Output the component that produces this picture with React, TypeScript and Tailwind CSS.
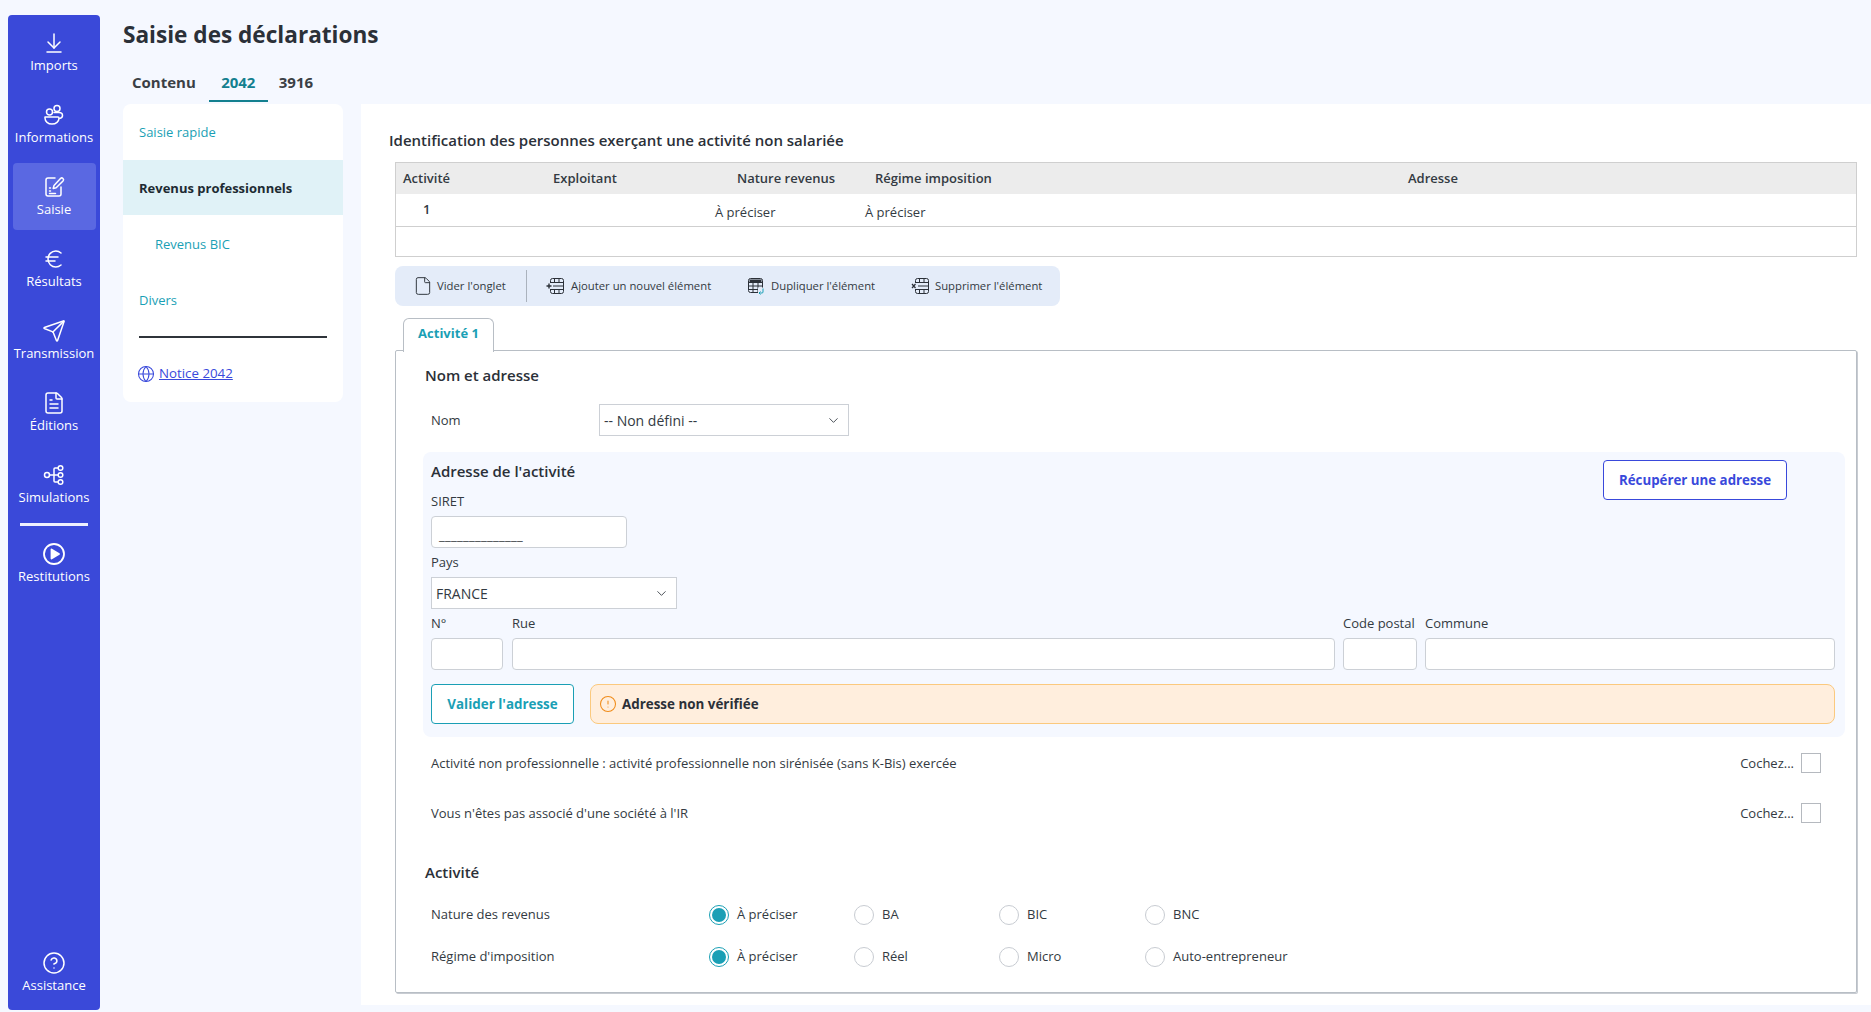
import React from "react";
import { ArrowDownToLine, Euro, Send, FileText, CircleHelp, Globe, File, ChevronDown, CircleAlert } from "lucide-react";

const Icon = ({ children }: { children: React.ReactNode }) => (
  <svg width="24" height="24" viewBox="0 0 24 24" fill="none" stroke="currentColor" strokeWidth="1.5" strokeLinecap="round" strokeLinejoin="round">{children}</svg>
);

const InfoIcon = () => (
  <Icon>
    <circle cx="7.500" cy="9" r="3" />
    <circle cx="15" cy="5.500" r="3" />
    <path d="M3 14h13c.5 0 1 .4 1 1 0 3.500-3 6-7 6s-7-2.500-7-6c0-.6 0-1 0-1z" />
    <path d="M12 9.500h5c2.500 0 3.500 1.500 3.500 3s-1 2.800-3 3" />
  </Icon>
);
const SaisieIcon = () => (
  <Icon>
    <path d="M13 3H6a2 2 0 0 0-2 2v14a2 2 0 0 0 2 2h11a2 2 0 0 0 2-2v-7" />
    <path d="M21 3.500a1.800 1.800 0 0 0-2.500 0L12 10.500l-.8 3 3-.8 6.800-6.700a1.800 1.800 0 0 0 0-2.500z" />
    <path d="M7.500 13h1M7.500 16h1M7.500 18.500h6" />
  </Icon>
);
const SimIcon = () => (
  <Icon>
    <circle cx="5" cy="12" r="2.500" />
    <circle cx="18.500" cy="5" r="2.300" />
    <circle cx="18.500" cy="12" r="2.300" />
    <circle cx="18.500" cy="19" r="2.300" />
    <path d="M7.500 12h8.700M16.200 5H13a1 1 0 0 0-1 1v12a1 1 0 0 0 1 1h3.200" />
  </Icon>
);
const PlayIcon = () => (
  <svg width="24" height="24" viewBox="0 0 24 24" fill="none" stroke="currentColor" strokeWidth="1.8">
    <circle cx="12" cy="12" r="10" />
    <path d="M9.500 7.500l7.500 4.500-7.500 4.500z" fill="currentColor" strokeLinejoin="round" />
  </svg>
);

const TableIcon = ({ mark }: { mark: "add" | "dup" | "del" }) => (
  <svg width="18" height="18" viewBox="0 0 18 18" fill="none" stroke="#2b3038" strokeWidth="1">
    {mark === "dup" ? (
      <>
        <rect x="1.500" y="1.500" width="14" height="14" rx="2" />
        <path d="M1.500 5.500h14M1.500 9h14M1.500 12.500h14M6 5.500v10M11 5.500v10" />
        <path d="M2.500 2.500h12v2.500h-12z" fill="#2b3038" stroke="none" />
        <rect x="11" y="10.500" width="6.500" height="7" fill="#e4ecf9" stroke="none" />
        <path d="M16 11.500v3.500a1 1 0 0 1-1 1h-2.500M13.500 14.500l-1.500 1.500 1.500 1.500" stroke="#1a9fb5" />
      </>
    ) : (
      <>
        <path d="M4.500 6V3.500a2 2 0 0 1 2-2h9a2 2 0 0 1 2 2v11a2 2 0 0 1-2 2h-9a2 2 0 0 1-2-2V12" />
        <path d="M5 5.500h12.500M7 9h10.500M5 12.500h12.500M8.500 1.500v4M13 1.500v4M8.500 12.500v4M13 12.500v4" />
        {mark === "add" ? (
          <path d="M.5 9h5M3 6.500v5" strokeWidth="1.400" />
        ) : (
          <path d="M1 7l3.500 4M4.500 7L1 11" strokeWidth="1.200" />
        )}
      </>
    )}
  </svg>
);

const nav = [
  { label: "Imports", icon: <ArrowDownToLine size={24} strokeWidth={1.5} /> },
  { label: "Informations", icon: <InfoIcon /> },
  { label: "Saisie", icon: <SaisieIcon />, active: true },
  { label: "Résultats", icon: <Euro size={24} strokeWidth={1.5} /> },
  { label: "Transmission", icon: <Send size={24} strokeWidth={1.5} /> },
  { label: "Éditions", icon: <FileText size={24} strokeWidth={1.5} /> },
  { label: "Simulations", icon: <SimIcon /> },
];

const NavItem = ({ label, icon, active }: { label: string; icon: React.ReactNode; active?: boolean }) => (
  <div className={`flex h-[67px] w-[83px] flex-col items-center justify-center rounded-[4px] text-white ${active ? "bg-[#5a68e2]" : ""}`}>
    {icon}
    <span className="mt-[1px] text-[13px] leading-[18px] whitespace-nowrap">{label}</span>
  </div>
);

const Input = ({ className }: { className: string }) => (
  <div className={`h-[32px] rounded-[4px] border border-[#ccd0d6] bg-white ${className}`} />
);

const Select = ({ value, className }: { value: string; className: string }) => (
  <div className={`flex h-[32px] items-center justify-between border border-[#ccd0d6] bg-white pt-[1px] pr-[7px] pl-[4px] text-[14px] text-[#333a42] ${className}`}>
    <span>{value}</span>
    <ChevronDown size={15} strokeWidth={1.4} className="text-[#333a42]" />
  </div>
);

const Radio = ({ on, label, className }: { on?: boolean; label: string; className: string }) => (
  <div className={`flex items-center gap-[8px] ${className}`}>
    <span className={`flex h-[20px] w-[20px] items-center justify-center rounded-full border bg-white ${on ? "border-[#1a9fb5]" : "border-[#c8ccd2]"}`}>
      {on && <span className="h-[14px] w-[14px] rounded-full bg-[#1a9fb5]" />}
    </span>
    <span>{label}</span>
  </div>
);

const CheckRow = ({ label, className }: { label: string; className: string }) => (
  <div className={`flex items-center justify-between pr-[24px] pl-[6px] ${className}`}>
    <span className="pt-[2px]">{label}</span>
    <div className="flex items-center gap-[7px]">
      <span className="pt-[2px]">Cochez...</span>
      <span className="h-[20px] w-[20px] border border-[#b5b9bf] bg-white" />
    </div>
  </div>
);

const RadioRow = ({ label, options, className }: { label: string; options: string[]; className: string }) => (
  <div className={`flex h-[24px] items-center pl-[6px] ${className}`}>
    <span className="w-[278px]">{label}</span>
    <Radio on label={options[0]} className="w-[145px]" />
    <Radio label={options[1]} className="w-[145px]" />
    <Radio label={options[2]} className="w-[146px]" />
    <Radio label={options[3]} className="w-[160px]" />
  </div>
);

export default function App() {
  return (
    <div className="flex h-[1012px] w-[1871px] overflow-hidden bg-[#f5f8ff] text-[13px] text-[#333a42]" style={{ fontFamily: '"Open Sans", "Noto Sans", sans-serif' }}>
      <aside className="mt-[15px] mb-[2px] ml-[8px] flex w-[92px] shrink-0 flex-col items-center rounded-[4px] bg-[#3a49d9] pt-[4px] pb-[4px]">
        <div className="flex flex-col gap-[5px]">
          {nav.map((n) => (
            <NavItem key={n.label} {...n} />
          ))}
        </div>
        <div className="mt-[5px] h-[3px] w-[68px] shrink-0 bg-[#eef0ff]" />
        <div className="mt-[4px]"><NavItem label="Restitutions" icon={<PlayIcon />} /></div>
        <div className="mt-auto"><NavItem label="Assistance" icon={<CircleHelp size={24} strokeWidth={1.5} />} /></div>
      </aside>

      <div className="ml-[23px] flex min-w-0 flex-1 flex-col">
        <h1 className="mt-[17px] h-[36px] text-[22.6px] leading-[36px] font-bold text-[#2b3038]">Saisie des déclarations</h1>
        <div className="mt-[14px] ml-[9px] flex h-[37px] items-start text-[15px] leading-[30px] font-bold text-[#3b3f45]">
          <span className="pr-[13px]">Contenu</span>
          <span className="h-[35px] w-[59px] border-b-[2px] border-[#13808f] text-center text-[#13808f]">2042</span>
          <span className="pl-[11px]">3916</span>
        </div>

        <div className="flex flex-1 items-start">
          <nav className="h-[298px] w-[220px] shrink-0 rounded-[8px] bg-white text-[13px] text-[#1a9fb5]">
            <div className="flex h-[56px] items-center pt-[2px] pl-[16px]">Saisie rapide</div>
            <div className="flex h-[55px] items-center bg-[#e0f2f7] pt-[2px] pl-[16px] font-bold text-[#1d2b33]">Revenus professionnels</div>
            <div className="flex h-[56px] items-center pt-[4px] pl-[32px]">Revenus BIC</div>
            <div className="flex h-[56px] items-center pt-[4px] pl-[16px]">Divers</div>
            <div className="mx-[16px] mt-[9px] h-[2px] bg-[#2f343a]" />
            <div className="mt-[26px] flex items-center gap-[4px] pl-[14px] text-[13.3px] text-[#3949db]">
              <Globe size={18} strokeWidth={1.4} />
              <span className="underline">Notice 2042</span>
            </div>
          </nav>

          <main className="mb-[7px] ml-[18px] h-[901px] min-w-0 flex-1 bg-white pr-[14px] pl-[28px]">
            <h2 className="mt-[23px] h-[26px] text-[15px] leading-[26px] font-semibold text-[#2b3038]">Identification des personnes exerçant une activité non salariée</h2>
            <div className="mt-[9px] ml-[6px] h-[95px] border border-[#cfcfcf] text-[13px]">
              <div className="flex h-[31px] items-center bg-[#ececec] font-semibold text-[#333a42]">
                <span className="w-[157px] pl-[7px]">Activité</span>
                <span className="w-[184px]">Exploitant</span>
                <span className="w-[138px]">Nature revenus</span>
                <span className="w-[533px]">Régime imposition</span>
                <span>Adresse</span>
              </div>
              <div className="flex h-[33px] items-center border-b border-[#cfcfcf]">
                <span className="w-[319px] pl-[27px] font-semibold">1</span>
                <span className="w-[150px] pt-[5px]">À préciser</span>
                <span className="pt-[5px]">À préciser</span>
              </div>
            </div>

            <div className="mt-[9px] ml-[6px] flex h-[40px] w-[665px] items-center rounded-[8px] bg-[#e4ecf9] pl-[19px] text-[11.3px] whitespace-nowrap">
              <File size={20} strokeWidth={1.2} className="-mx-[1px]" />
              <span className="ml-[5px] w-[70px]">Vider l'onglet</span>
              <span className="ml-[19px] h-[32px] w-px bg-[#aab2bd]" />
              <span className="ml-[19px]"><TableIcon mark="add" /></span>
              <span className="ml-[7px] w-[141px]">Ajouter un nouvel élément</span>
              <span className="ml-[35px]"><TableIcon mark="dup" /></span>
              <span className="ml-[6px] w-[112px]">Dupliquer l'élément</span>
              <span className="ml-[28px]"><TableIcon mark="del" /></span>
              <span className="ml-[6px]">Supprimer l'élément</span>
            </div>

            <div className="relative z-10 mt-[12px] -mb-[2px] ml-[14px] flex h-[34px] w-[91px] items-center justify-center rounded-t-[6px] border-[1.5px] border-b-0 border-[#b8bec5] bg-white pb-[3px] text-[13px] font-bold text-[#1a9fb5]">Activité 1</div>

            <section className="ml-[6px] h-[643px] rounded-[2px] border border-[#b8bec5] pr-[11px] pl-[29px] shadow-[1px_1px_0_#c8ccd2]">
              <h3 className="mt-[12px] h-[24px] text-[15px] leading-[24px] font-semibold text-[#2b3038]">Nom et adresse</h3>
              <div className="mt-[17px] flex items-center pl-[6px]">
                <span className="w-[168px] pt-[2px]">Nom</span>
                <Select value="-- Non défini --" className="w-[250px]" />
              </div>

              <div className="mt-[16px] -ml-[2px] h-[285px] rounded-[8px] bg-[#f5f8ff] pt-[8px] pr-[10px] pl-[8px]">
                <div className="flex items-start justify-between">
                  <div>
                    <h4 className="h-[22px] text-[15px] leading-[22px] font-semibold text-[#2b3038]">Adresse de l'activité</h4>
                    <div className="mt-[10px] h-[18px] leading-[18px]">SIRET</div>
                    <div className="mt-[6px] flex h-[32px] w-[196px] items-end rounded-[4px] border border-[#ccd0d6] bg-white pb-[5px] pl-[7px] leading-none tracking-[0.3px]">______________</div>
                    <div className="mt-[5px] h-[18px] leading-[18px]">Pays</div>
                    <Select value="FRANCE" className="mt-[6px] w-[246px]" />
                  </div>
                  <button className="mr-[48px] h-[40px] w-[184px] rounded-[4px] border border-[#3949db] bg-white pt-[2px] text-[13.3px] font-bold text-[#3949db]">Récupérer une adresse</button>
                </div>
                <div className="mt-[5px] flex gap-[8px]">
                  <div className="w-[73px]"><div className="h-[24px] leading-[18px]">N°</div><Input className="w-[72px]" /></div>
                  <div className="flex-1"><div className="h-[24px] leading-[18px]">Rue</div><Input className="w-full" /></div>
                  <div className="w-[74px]"><div className="h-[24px] leading-[18px] whitespace-nowrap">Code postal</div><Input className="w-full" /></div>
                  <div className="w-[410px]"><div className="h-[24px] leading-[18px]">Commune</div><Input className="w-full" /></div>
                </div>
                <div className="mt-[14px] flex gap-[16px]">
                  <button className="h-[40px] w-[143px] shrink-0 rounded-[4px] border border-[#1a9fb5] bg-white text-[13.4px] font-bold text-[#1a9fb5]">Valider l'adresse</button>
                  <div className="flex h-[40px] flex-1 items-center gap-[5px] rounded-[8px] border border-[#fbc97e] bg-[#ffeedd] pl-[8px] text-[13.4px] font-bold text-[#2b3038]">
                    <CircleAlert size={18} strokeWidth={1.4} className="text-[#f08c1a]" />
                    <span>Adresse non vérifiée</span>
                  </div>
                </div>
              </div>

              <CheckRow label="Activité non professionnelle : activité professionnelle non sirénisée (sans K-Bis) exercée" className="mt-[16px] h-[20px]" />
              <CheckRow label="Vous n'êtes pas associé d'une société à l'IR" className="mt-[30px] h-[20px]" />

              <h3 className="mt-[37px] h-[24px] text-[15px] leading-[24px] font-semibold text-[#2b3038]">Activité</h3>
              <RadioRow label="Nature des revenus" options={["À préciser", "BA", "BIC", "BNC"]} className="mt-[19px]" />
              <RadioRow label="Régime d'imposition" options={["À préciser", "Réel", "Micro", "Auto-entrepreneur"]} className="mt-[18px]" />
            </section>
          </main>
        </div>
      </div>
    </div>
  );
}
